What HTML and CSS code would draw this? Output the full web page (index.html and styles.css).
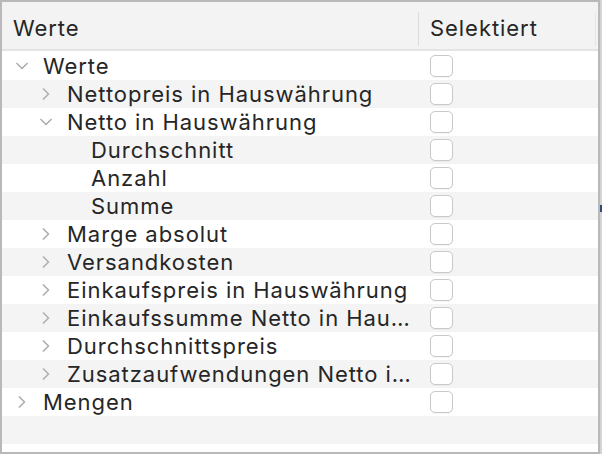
FILE: index.html
```html
<!DOCTYPE html>
<html lang="de">
<head>
<meta charset="utf-8">
<title>Werte</title>
<link rel="stylesheet" href="styles.css">
</head>
<body>
<div class="frame">
  <div class="outline">
    <div class="header">
      <div class="hcell hname">Werte</div>
      <div class="hcell hsel">Selektiert</div>
      <div class="hrest"></div>
    </div>
    <div class="rows">
      <div class="row l0"><span class="chev"><svg width="12" height="8" viewBox="0 0 12 8"><path d="M1 1.5 L6 6.5 L11 1.5"/></svg></span><span class="label">Werte</span><span class="sel"><span class="box"></span></span></div>
      <div class="row l1"><span class="chev"><svg width="8" height="12" viewBox="0 0 8 12"><path d="M1.5 1 L6.5 6 L1.5 11"/></svg></span><span class="label">Nettopreis in Hauswährung</span><span class="sel"><span class="box"></span></span></div>
      <div class="row l1"><span class="chev"><svg width="12" height="8" viewBox="0 0 12 8"><path d="M1 1.5 L6 6.5 L11 1.5"/></svg></span><span class="label">Netto in Hauswährung</span><span class="sel"><span class="box"></span></span></div>
      <div class="row l2"><span class="chev"></span><span class="label">Durchschnitt</span><span class="sel"><span class="box"></span></span></div>
      <div class="row l2"><span class="chev"></span><span class="label">Anzahl</span><span class="sel"><span class="box"></span></span></div>
      <div class="row l2"><span class="chev"></span><span class="label">Summe</span><span class="sel"><span class="box"></span></span></div>
      <div class="row l1"><span class="chev"><svg width="8" height="12" viewBox="0 0 8 12"><path d="M1.5 1 L6.5 6 L1.5 11"/></svg></span><span class="label">Marge absolut</span><span class="sel"><span class="box"></span></span></div>
      <div class="row l1"><span class="chev"><svg width="8" height="12" viewBox="0 0 8 12"><path d="M1.5 1 L6.5 6 L1.5 11"/></svg></span><span class="label">Versandkosten</span><span class="sel"><span class="box"></span></span></div>
      <div class="row l1"><span class="chev"><svg width="8" height="12" viewBox="0 0 8 12"><path d="M1.5 1 L6.5 6 L1.5 11"/></svg></span><span class="label">Einkaufspreis in Hauswährung</span><span class="sel"><span class="box"></span></span></div>
      <div class="row l1"><span class="chev"><svg width="8" height="12" viewBox="0 0 8 12"><path d="M1.5 1 L6.5 6 L1.5 11"/></svg></span><span class="label">Einkaufssumme Netto in Hau…</span><span class="sel"><span class="box"></span></span></div>
      <div class="row l1"><span class="chev"><svg width="8" height="12" viewBox="0 0 8 12"><path d="M1.5 1 L6.5 6 L1.5 11"/></svg></span><span class="label">Durchschnittspreis</span><span class="sel"><span class="box"></span></span></div>
      <div class="row l1"><span class="chev"><svg width="8" height="12" viewBox="0 0 8 12"><path d="M1.5 1 L6.5 6 L1.5 11"/></svg></span><span class="label">Zusatzaufwendungen Netto i…</span><span class="sel"><span class="box"></span></span></div>
      <div class="row l0"><span class="chev"><svg width="8" height="12" viewBox="0 0 8 12"><path d="M1.5 1 L6.5 6 L1.5 11"/></svg></span><span class="label">Mengen</span><span class="sel"><span class="box"></span></span></div>
      <div class="row empty"></div>
    </div>
  </div>
  <span class="edge-mark"></span>
</div>
</body>
</html>
```
FILE: styles.css
```css
* { box-sizing: border-box; }
html, body { margin: 0; padding: 0; background: #ffffff; }
body {
  font-family: "Inter", "Liberation Sans", sans-serif;
  color: #262626;
}
.frame {
  position: relative;
  width: 602px;
  height: 454px;
  padding-right: 2px;
  background: #d4d4d4;
}
.outline {
  width: 600px;
  height: 454px;
  border: 2px solid #b9b9b9;
  background: #ffffff;
  display: flex;
  flex-direction: column;
}
.header {
  display: flex;
  height: 49px;
  background: #f2f3f2;
  border-bottom: 2px solid #e4e4e4;
  align-items: stretch;
  flex: none;
}
.hcell {
  font-size: 22px;
  letter-spacing: 0.95px;
  display: flex;
  align-items: center;
  padding-bottom: 2px;
}
.hname {
  width: 417px;
  padding-left: 11px;
  border-right: 1px solid #dcdcdc;
  margin: 10px 0 3px 0;
}
.hsel {
  width: 177px;
  padding-left: 11px;
  border-right: 1px solid #e6e6e6;
  margin: 10px 0 3px 0;
}
.hrest { flex: 1; }
.rows {
  padding-top: 1px;
}
.row {
  height: 28px;
  display: flex;
  align-items: center;
  font-size: 22px;
  letter-spacing: 0.95px;
  white-space: nowrap;
}
.row:nth-child(even) { background: #f4f4f4; }
.chev {
  width: 22px;
  display: flex;
  justify-content: center;
  align-items: center;
  flex: none;
  margin-right: 10px;
}
.chev svg path {
  fill: none;
  stroke: #b0b0b0;
  stroke-width: 1.7;
  stroke-linecap: round;
  stroke-linejoin: round;
}
.l0 .chev { margin-left: 9px; }
.l1 .chev { margin-left: 33px; }
.l2 .chev { margin-left: 57px; }
.label {
  flex: 1;
  overflow: hidden;
}
.sel {
  width: 179px;
  flex: none;
  padding-left: 11px;
  display: flex;
  align-items: center;
}
.box {
  width: 23px;
  height: 22px;
  border: 1px solid #c9c9c9;
  border-radius: 5px;
  background: #ffffff;
  box-shadow: 0 1px 0 rgba(0,0,0,0.04);
}
.edge-mark {
  position: absolute;
  right: 0;
  top: 205px;
  width: 2px;
  height: 7px;
  background: #2b4a7a;
}
```
